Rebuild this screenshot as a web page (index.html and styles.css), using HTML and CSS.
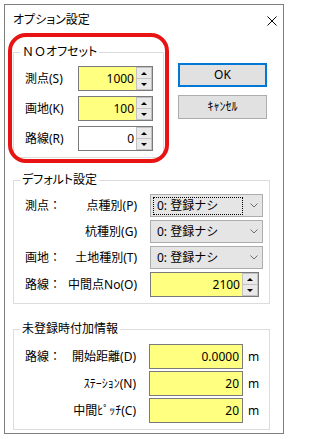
FILE: index.html
```html
<!DOCTYPE html>
<html lang="ja">
<head>
<meta charset="utf-8">
<title>オプション設定</title>
<link rel="stylesheet" href="styles.css">
</head>
<body>
<div class="window">
  <div class="titlebar">
    <span class="title">オプション設定</span>
    <svg class="close" width="10" height="10" viewBox="0 0 10 10"><path d="M0.5 0.5 L9.5 9.5 M9.5 0.5 L0.5 9.5"/></svg>
  </div>

  <div class="top">
    <fieldset class="group group-no">
      <legend>ＮＯ<span class="palt">オフセット</span></legend>
      <div class="inner no-rows">
        <div class="row">
          <span class="lbl">測点(S)</span>
          <div class="spin yellow">
            <span class="val">1000</span>
            <span class="btns"><span class="sbtn"><i class="up"></i></span><span class="sbtn"><i class="down"></i></span></span>
          </div>
        </div>
        <div class="row">
          <span class="lbl">画地(K)</span>
          <div class="spin yellow">
            <span class="val">100</span>
            <span class="btns"><span class="sbtn"><i class="up"></i></span><span class="sbtn"><i class="down"></i></span></span>
          </div>
        </div>
        <div class="row">
          <span class="lbl">路線(R)</span>
          <div class="spin">
            <span class="val">0</span>
            <span class="btns"><span class="sbtn"><i class="up"></i></span><span class="sbtn"><i class="down"></i></span></span>
          </div>
        </div>
      </div>
    </fieldset>
    <div class="buttons">
      <button class="btn ok">OK</button>
      <button class="btn">ｷｬﾝｾﾙ</button>
    </div>
  </div>

  <fieldset class="group group-def">
    <legend class="palt">デフォルト設定</legend>
    <div class="inner grid def-grid">
      <span class="lbl">測点：</span>
      <span class="lbl2">点種別(P)</span>
      <div class="combo"><span class="ctext focus">0: 登録ナシ</span><svg class="chev" width="8" height="5" viewBox="0 0 8 5"><polyline points="0.5,0.5 4,4 7.5,0.5"/></svg></div>

      <span class="lbl"></span>
      <span class="lbl2">杭種別(G)</span>
      <div class="combo"><span class="ctext">0: 登録ナシ</span><svg class="chev" width="8" height="5" viewBox="0 0 8 5"><polyline points="0.5,0.5 4,4 7.5,0.5"/></svg></div>

      <span class="lbl">画地：</span>
      <span class="lbl2">土地種別(T)</span>
      <div class="combo"><span class="ctext">0: 登録ナシ</span><svg class="chev" width="8" height="5" viewBox="0 0 8 5"><polyline points="0.5,0.5 4,4 7.5,0.5"/></svg></div>

      <span class="lbl">路線：</span>
      <span class="lbl2">中間点No(O)</span>
      <div class="spin yellow spin-wide">
        <span class="val">2100</span>
        <span class="btns"><span class="sbtn"><i class="up"></i></span><span class="sbtn"><i class="down"></i></span></span>
      </div>
    </div>
  </fieldset>

  <fieldset class="group group-add">
    <legend>未登録時付加情報</legend>
    <div class="inner grid add-grid">
      <span class="lbl">路線：</span>
      <span class="lbl2">開始距離(D)</span>
      <span class="tbox">0.0000</span>
      <span class="unit">m</span>

      <span class="lbl"></span>
      <span class="lbl2">ｽﾃｰｼｮﾝ(N)</span>
      <span class="tbox">20</span>
      <span class="unit">m</span>

      <span class="lbl"></span>
      <span class="lbl2">中間ﾋﾟｯﾁ(C)</span>
      <span class="tbox">20</span>
      <span class="unit">m</span>
    </div>
  </fieldset>

  <div class="highlight"></div>
</div>
</body>
</html>
```

FILE: styles.css
```css
html, body {
  margin: 0;
  padding: 0;
  background: #ffffff;
}

body {
  font-family: "Noto Sans", "Noto Sans CJK JP", sans-serif;
  font-size: 12px;
  color: #000000;
}

.window {
  position: relative;
  box-sizing: border-box;
  margin: 4px 0 0 4px;
  width: 280px;
  height: 430px;
  border: 1px solid #7f7f7f;
  background: #ffffff;
}

.titlebar {
  height: 30px;
  display: flex;
  align-items: center;
  justify-content: space-between;
  padding: 0 6px 0 8px;
}

.title {
  line-height: 16px;
  font-feature-settings: "palt" 1;
}

.palt {
  font-feature-settings: "palt" 1;
}

.close {
  margin-top: 2px;
  stroke: #000000;
  stroke-width: 1;
  fill: none;
}

.top {
  display: flex;
  align-items: flex-start;
  margin-top: 9px;
  padding-left: 8px;
}

fieldset.group {
  margin: 0;
  padding: 0;
  min-width: 0;
  box-sizing: border-box;
  border: 1px solid #dcdcdc;
}

fieldset.group legend {
  margin-left: 6px;
  padding: 0 2px;
  height: 16px;
  line-height: 16px;
}

fieldset.group-no {
  width: 151px;
}

.no-rows {
  display: flex;
  flex-direction: column;
  gap: 5px;
  padding: 6px 0 6px 11px;
}

.row {
  display: flex;
  align-items: center;
  height: 25px;
}

.row .lbl {
  width: 53px;
}

.lbl, .lbl2, .unit {
  line-height: 16px;
  white-space: nowrap;
}

.spin {
  box-sizing: border-box;
  display: flex;
  width: 75px;
  height: 25px;
  border: 1px solid #7a7a7a;
  background: #ffffff;
}

.spin.yellow .val {
  background: #ffff80;
}

.spin-wide {
  width: 109px;
}

.val {
  flex: 1;
  text-align: right;
  padding-right: 2px;
  line-height: 23px;
}

.btns {
  width: 16px;
  display: flex;
  flex-direction: column;
  background: #ffffff;
}

.sbtn {
  flex: 1;
  box-sizing: border-box;
  border: 1px solid #c2c2c2;
  background: #e9e9e9;
  display: flex;
  align-items: center;
  justify-content: center;
}

.sbtn + .sbtn {
  border-top: none;
}

.up, .down {
  display: block;
  width: 0;
  height: 0;
  border-left: 3px solid transparent;
  border-right: 3px solid transparent;
}

.up {
  border-bottom: 3px solid #000000;
}

.down {
  border-top: 3px solid #000000;
}

.buttons {
  display: flex;
  flex-direction: column;
  gap: 8px;
  margin-left: 14px;
  padding-top: 19px;
}

.btn {
  box-sizing: border-box;
  width: 89px;
  height: 24px;
  margin: 0;
  padding: 0;
  border: 1px solid #adadad;
  background: #e1e1e1;
  font-family: "Noto Sans", "Noto Sans CJK JP", sans-serif;
  font-size: 12px;
  color: #000000;
  line-height: 20px;
}

.btn.ok {
  border: 2px solid #0078d7;
}

fieldset.group-def {
  margin: 14px 0 0 8px;
  width: 257px;
}

.grid {
  display: grid;
  align-items: center;
}

.def-grid {
  grid-template-columns: 38px 87px 113px;
  grid-template-rows: 23px 23px 23px 25px;
  row-gap: 3px;
  padding: 6px 0 6px 11px;
}

.lbl2 {
  text-align: right;
  padding-right: 13px;
}

.combo {
  box-sizing: border-box;
  height: 23px;
  border: 1px solid #adadad;
  background: #e5e5e5;
  display: flex;
  align-items: center;
  padding-left: 2px;
}

.ctext {
  box-sizing: border-box;
  width: 90px;
  height: 18px;
  line-height: 16px;
  padding-left: 3px;
  border: 1px dotted transparent;
  white-space: nowrap;
}

.ctext.focus {
  border-color: #000000;
}

.chev {
  margin-left: 7px;
  fill: none;
  stroke: #6d6d6d;
  stroke-width: 1;
}

fieldset.group-add {
  margin: 17px 0 0 8px;
  width: 257px;
}

.add-grid {
  grid-template-columns: 38px 86px 94px auto;
  grid-template-rows: 25px 25px 25px;
  row-gap: 2px;
  padding: 7px 0 6px 11px;
}

.tbox {
  box-sizing: border-box;
  height: 25px;
  border: 1px solid #7a7a7a;
  background: #ffff80;
  text-align: right;
  padding-right: 3px;
  line-height: 23px;
}

.unit {
  margin-left: 5px;
}

.highlight {
  position: absolute;
  left: 3px;
  top: 28px;
  width: 161px;
  height: 130px;
  box-sizing: border-box;
  border: 4px solid #e81414;
  border-radius: 18px;
  pointer-events: none;
}
```
